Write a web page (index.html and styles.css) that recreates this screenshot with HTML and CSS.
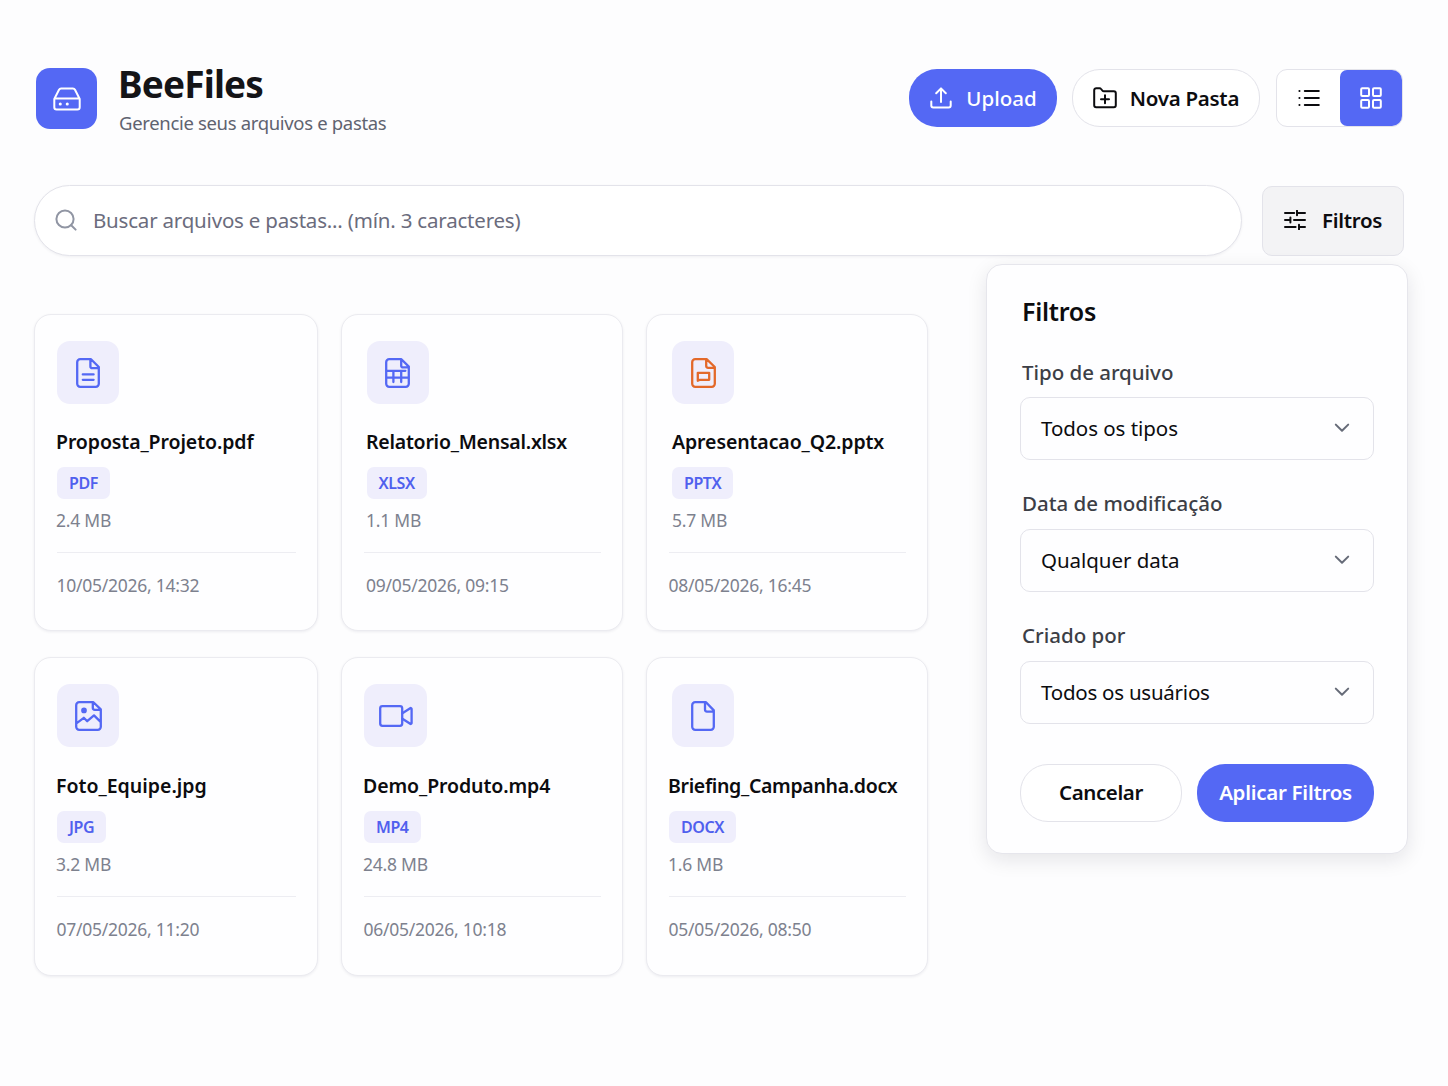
FILE: index.html
```
<!DOCTYPE html>
<html lang="pt-BR">
<head>
<meta charset="utf-8">
<title>BeeFiles</title>
<link rel="stylesheet" href="styles.css">
</head>
<body>
<div class="page">
  <header class="header">
    <div class="brand">
      <div class="logo">
        <svg width="28" height="24" viewBox="0 0 28 24"><path d="M1.3 12 6 2.8a2.4 2.4 0 0 1 2.1-1.3h11.8A2.4 2.4 0 0 1 22 2.8L26.7 12v8.2a2.3 2.3 0 0 1-2.3 2.3H3.6a2.3 2.3 0 0 1-2.3-2.3zM1.6 11.6h24.8"/><path class="dots" d="M7.2 17h.1M14.2 17h.1"/></svg>
      </div>
      <div class="brand-text">
        <h1>BeeFiles</h1>
        <p>Gerencie seus arquivos e pastas</p>
      </div>
    </div>
    <div class="actions">
      <button class="btn btn-primary btn-upload">
        <svg width="22" height="22" viewBox="0 0 22 22"><path d="M11 15V1.8M6.2 6.2 11 1.4l4.8 4.8M1.3 14.6v4a2 2 0 0 0 2 2h15.4a2 2 0 0 0 2-2v-4"/></svg>
        <span>Upload</span>
      </button>
      <button class="btn btn-outline btn-folder">
        <svg width="24" height="22" viewBox="0 0 24 22"><path d="M1.2 3.2a2 2 0 0 1 2-2h3.3a2 2 0 0 1 1.6.8l1.2 1.5a2 2 0 0 0 1.6.8h9.9a2 2 0 0 1 2 2v12a2 2 0 0 1-2 2H3.2a2 2 0 0 1-2-2zM12 8.2v8M8 12.2h8"/></svg>
        <span>Nova Pasta</span>
      </button>
      <div class="view-toggle">
        <button class="view"><svg width="22" height="18" viewBox="0 0 22 18"><path d="M6.8 2h14M6.8 9h14M6.8 16h14M1.4 2h.1M1.4 9h.1M1.4 16h.1"/></svg></button>
        <button class="view active"><svg width="24" height="24" viewBox="0 0 24 24"><rect x="2.2" y="2.2" width="7.8" height="7.8" rx="1"/><rect x="14" y="2.2" width="7.8" height="7.8" rx="1"/><rect x="2.2" y="14" width="7.8" height="7.8" rx="1"/><rect x="14" y="14" width="7.8" height="7.8" rx="1"/></svg></button>
      </div>
    </div>
  </header>

  <div class="toolbar">
    <label class="search">
      <svg width="22" height="22" viewBox="0 0 22 22"><circle cx="10" cy="10" r="8.6"/><path d="m16.2 16.2 4.4 4.4"/></svg>
      <span>Buscar arquivos e pastas... (mín. 3 caracteres)</span>
    </label>
    <div class="filter">
      <button class="filter-button">
        <svg width="22" height="20" viewBox="0 0 22 20"><path d="M1 3h9.2M13 3h8M13 .7v4.6M1 10h5.2M10 10h11M6.4 7.6v4.8M1 17h10.6M15 17h6M15 14.7v4.6"/></svg>
        <span>Filtros</span>
      </button>
      <section class="panel">
        <h2>Filtros</h2>
        <div class="field field-type">
          <span class="label">Tipo de arquivo</span>
          <div class="select"><span>Todos os tipos</span><svg width="16" height="10" viewBox="0 0 16 10"><path d="m1.8 1.6 6.2 6.2 6.2-6.2"/></svg></div>
        </div>
        <div class="field field-date">
          <span class="label">Data de modificação</span>
          <div class="select"><span>Qualquer data</span><svg width="16" height="10" viewBox="0 0 16 10"><path d="m1.8 1.6 6.2 6.2 6.2-6.2"/></svg></div>
        </div>
        <div class="field field-owner">
          <span class="label">Criado por</span>
          <div class="select"><span>Todos os usuários</span><svg width="16" height="10" viewBox="0 0 16 10"><path d="m1.8 1.6 6.2 6.2 6.2-6.2"/></svg></div>
        </div>
        <div class="panel-actions">
          <button class="btn btn-outline btn-cancel">Cancelar</button>
          <button class="btn btn-primary btn-apply">Aplicar Filtros</button>
        </div>
      </section>
    </div>
  </div>

  <main class="files">
    <article class="card pdf">
      <div class="file-icon"><svg width="24" height="30" viewBox="0 0 24 30"><path d="M15 1.2H4.2a3 3 0 0 0-3 3v21.6a3 3 0 0 0 3 3h15.6a3 3 0 0 0 3-3V9zM14.4 1.4v6.8a2 2 0 0 0 2 2h6.2M6.8 16.4h10.8M6.8 21.8h10.8"/></svg></div>
      <h3>Proposta_Projeto.pdf</h3>
      <span class="badge">PDF</span>
      <p class="size">2.4 MB</p>
      <p class="date">10/05/2026, 14:32</p>
    </article>
    <article class="card xlsx">
      <div class="file-icon"><svg width="25" height="30" viewBox="0 0 25 30"><path d="M16.4 1.2H4.2a3 3 0 0 0-3 3v21.6a3 3 0 0 0 3 3h16.6a3 3 0 0 0 3-3V8.6zM16.2 1.4v6a2 2 0 0 0 2 2h5.4M1.4 12.8h19M1.4 19.6h22.2M8.4 12.8V24M16.2 12.8V24"/></svg></div>
      <h3>Relatorio_Mensal.xlsx</h3>
      <span class="badge">XLSX</span>
      <p class="size">1.1 MB</p>
      <p class="date">09/05/2026, 09:15</p>
    </article>
    <article class="card pptx">
      <div class="file-icon"><svg width="25" height="30" viewBox="0 0 25 30"><path d="M15.6 1.2H4.2a3 3 0 0 0-3 3v21.6a3 3 0 0 0 3 3h16.6a3 3 0 0 0 3-3V9zM15.2 1.4v6.4a2 2 0 0 0 2 2h6.4M6.8 22.8v-8h11.4v7H9z"/></svg></div>
      <h3>Apresentacao_Q2.pptx</h3>
      <span class="badge">PPTX</span>
      <p class="size">5.7 MB</p>
      <p class="date">08/05/2026, 16:45</p>
    </article>
    <article class="card jpg">
      <div class="file-icon"><svg width="27" height="30" viewBox="0 0 27 30"><path d="M18.4 1.2H4.2a3 3 0 0 0-3 3v21.6a3 3 0 0 0 3 3h18.6a3 3 0 0 0 3-3V8.4zM17.8 1.4v5.4a2 2 0 0 0 2 2h5.6M1.4 22.4l7.4-5.6 3.4 3.4 6.8-5.8 6.6 6.4"/><circle class="solid" cx="9" cy="9.4" r="1.7"/></svg></div>
      <h3>Foto_Equipe.jpg</h3>
      <span class="badge">JPG</span>
      <p class="size">3.2 MB</p>
      <p class="date">07/05/2026, 11:20</p>
    </article>
    <article class="card mp4">
      <div class="file-icon"><svg width="34" height="22" viewBox="0 0 34 22"><rect x="1.2" y="1.2" width="22" height="19.6" rx="2.2"/><path d="m23.4 8.2 7.8-5a.9.9 0 0 1 1.4.8v14a.9.9 0 0 1-1.4.8l-7.8-5"/></svg></div>
      <h3>Demo_Produto.mp4</h3>
      <span class="badge">MP4</span>
      <p class="size">24.8 MB</p>
      <p class="date">06/05/2026, 10:18</p>
    </article>
    <article class="card docx">
      <div class="file-icon"><svg width="24" height="30" viewBox="0 0 24 30"><path d="M15 1.2H4.2a3 3 0 0 0-3 3v21.6a3 3 0 0 0 3 3h15.6a3 3 0 0 0 3-3V9.4zM14 1.4v7.2a2 2 0 0 0 2 2h6.6"/></svg></div>
      <h3>Briefing_Campanha.docx</h3>
      <span class="badge">DOCX</span>
      <p class="size">1.6 MB</p>
      <p class="date">05/05/2026, 08:50</p>
    </article>
  </main>
</div>
</body>
</html>
```
FILE: styles.css
```
:root {
  --blue: #5468f4;
  --tint: #efeefc;
  --line: #e3e3ea;
  --ink: #0c0c0f;
}

* { box-sizing: border-box; }

body {
  margin: 0;
  background: #fdfdfe;
  color: var(--ink);
  font-family: "Noto Sans", "Open Sans", sans-serif;
  font-size: 20.5px;
}

h1, h2, h3, p { margin: 0; }

button {
  margin: 0;
  padding: 0;
  border: 0;
  background: none;
  color: inherit;
  font: inherit;
}

svg {
  display: block;
  flex: none;
  fill: none;
  stroke: currentColor;
  stroke-width: 2;
  stroke-linecap: round;
  stroke-linejoin: round;
}

.page {
  min-height: 1086px;
  padding: 60px 44px 0 34px;
}

/* Header */
.header {
  display: flex;
  align-items: center;
  justify-content: space-between;
  height: 77px;
}

.brand { display: flex; align-items: center; gap: 21px; padding-left: 2px; }

.logo {
  display: grid;
  place-items: center;
  width: 61px;
  height: 61px;
  border-radius: 14px;
  background: var(--blue);
  color: #fff;
}

.logo .dots { stroke-width: 3; }

.brand-text { display: flex; flex-direction: column; gap: 4px; padding-top: 1px; }

h1 {
  color: #141417;
  font-size: 37px;
  font-weight: 700;
  line-height: 44px;
  letter-spacing: -0.85px;
}

.brand-text p {
  margin-left: 1px;
  color: #5f6370;
  font-size: 18.5px;
  line-height: 26px;
  letter-spacing: -0.33px;
}

.actions { display: flex; align-items: center; margin: -2px 1px 0 0; }

.btn {
  display: flex;
  align-items: center;
  justify-content: center;
  height: 58px;
  border-radius: 28px;
  font-weight: 600;
  letter-spacing: -0.28px;
}

.btn-primary { background: var(--blue); color: #fff; }
.btn-outline { border: 1.5px solid var(--line); background: #fff; }
.btn-upload { width: 148px; gap: 14px; margin-right: 15px; padding-left: 1px; font-weight: 500; letter-spacing: 0; }
.btn-folder { width: 188px; gap: 13px; margin-right: 16px; }

.view-toggle {
  display: flex;
  width: 127px;
  height: 58px;
  border: 1px solid var(--line);
  border-radius: 11px;
  background: #fff;
}

.view { display: grid; place-items: center; flex: 1; padding-left: 1px; }
.view.active { border-radius: 7px 10px 10px 7px; background: var(--blue); color: #fff; }

/* Search and filter button */
.toolbar {
  display: flex;
  align-items: flex-end;
  gap: 20px;
  height: 71px;
  margin-top: 48px;
}

.search {
  display: flex;
  align-items: center;
  gap: 16px;
  width: 1208px;
  height: 71px;
  padding: 0 0 2px 20px;
  border: 1.5px solid var(--line);
  border-radius: 36px;
  background: #fff;
  box-shadow: 0 1px 3px rgba(20, 20, 50, .06);
  color: #6b6c7d;
  letter-spacing: -0.2px;
}

.search svg { color: #9095a3; }

.filter { position: relative; }

.filter-button {
  display: flex;
  align-items: center;
  justify-content: center;
  gap: 16px;
  width: 142px;
  height: 70px;
  padding-bottom: 2px;
  border: 1.5px solid var(--line);
  border-radius: 10px;
  background: #f3f3f5;
  font-weight: 600;
  letter-spacing: -0.3px;
}

/* Filter popover */
.panel {
  position: absolute;
  top: 78px;
  right: -4px;
  width: 422px;
  height: 590px;
  padding: 29px 33px 0;
  border: 1px solid #e6e6ec;
  border-radius: 16px;
  background: #fefeff;
  box-shadow: 0 6px 20px rgba(20, 20, 40, .1);
}

h2 {
  margin: 0 0 30px 2px;
  font-size: 25px;
  font-weight: 600;
  line-height: 34px;
  letter-spacing: -0.25px;
}

.field + .field { margin-top: 29px; }

.label {
  display: block;
  margin: 0 0 12px 2px;
  color: #3c3e46;
  font-weight: 500;
  line-height: 28px;
}

.field-type .label { margin: 0 0 11px 2px; letter-spacing: -0.03px; }
.field-owner .select { letter-spacing: -0.24px; }

.select {
  display: flex;
  align-items: center;
  justify-content: space-between;
  height: 63px;
  padding: 0 23px 1px 20px;
  border: 1.5px solid var(--line);
  border-radius: 10px;
  letter-spacing: -0.05px;
}

.select svg { color: #666b78; }

.panel-actions { display: flex; gap: 15px; margin-top: 40px; }
.panel-actions .btn { padding-bottom: 2px; }
.btn-cancel { width: 162px; letter-spacing: -0.4px; }
.btn-apply { width: 177px; }

/* File grid */
.files {
  display: grid;
  grid-template-columns: 284px 282px 282px;
  grid-template-rows: 317px 319px;
  gap: 26px 23px;
  margin-top: 58px;
}

.card {
  display: flex;
  flex-direction: column;
  align-items: flex-start;
  padding: 26px 21px 0 22px;
  border: 1.5px solid #ebebf0;
  border-radius: 17px;
  background: #fefeff;
  box-shadow: 0 1px 3px rgba(20, 20, 50, .07);
}

.file-icon {
  display: grid;
  place-items: center;
  width: 62px;
  height: 63px;
  border-radius: 13px;
  background: var(--tint);
  color: var(--blue);
}

.file-icon svg { stroke-width: 2.3; }

h3 {
  margin: 25px 0 12px -1px;
  font-size: 19.5px;
  font-weight: 600;
  line-height: 26px;
  letter-spacing: -0.1px;
  white-space: nowrap;
}

.badge {
  height: 32px;
  padding: 0 12px;
  border-radius: 7px;
  background: var(--tint);
  color: #5060ee;
  font-size: 16px;
  font-weight: 600;
  line-height: 32px;
  letter-spacing: -0.45px;
}

.size, .date {
  color: #7d818e;
  font-size: 17.5px;
  line-height: 24px;
  letter-spacing: -0.25px;
}

.size { margin: 9px 0 20px -1px; }

.date {
  align-self: stretch;
  padding-top: 20px;
  border-top: 1px solid #ededf2;
  text-indent: -0.5px;
}

.jpg h3, .mp4 h3, .docx h3 { margin-top: 26px; }

.xlsx .file-icon, .xlsx .badge { margin-left: 2.5px; }
.xlsx h3, .xlsx .size { margin-left: 2px; }
.xlsx h3 { letter-spacing: -0.24px; }
.xlsx .date { text-indent: 2px; }

.pptx .file-icon, .pptx .badge, .docx .file-icon { margin-left: 3px; }
.pptx h3, .pptx .size { margin-left: 3px; }
.pptx svg { color: #e3692a; }

.jpg h3 { letter-spacing: 0; }
.jpg .solid { fill: currentColor; }
.mp4 .file-icon { width: 63px; }
.docx h3 { letter-spacing: -0.33px; }
```
